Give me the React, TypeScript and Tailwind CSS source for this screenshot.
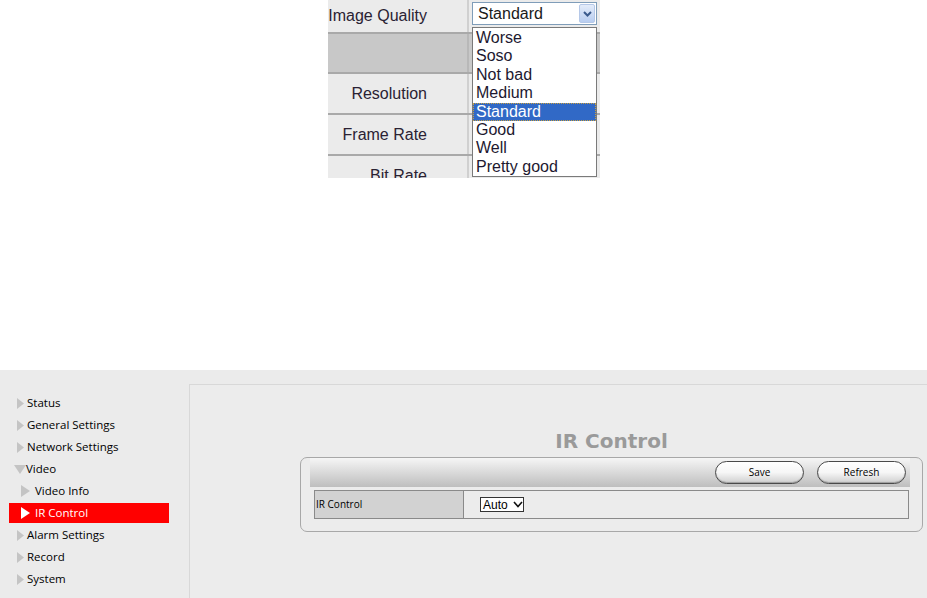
import React from 'react';

const qualityOptions = ['Worse', 'Soso', 'Not bad', 'Medium', 'Standard', 'Good', 'Well', 'Pretty good'];

type NavItem = { label: string; level: 0 | 1; open?: boolean; active?: boolean };

const navItems: NavItem[] = [
  { label: 'Status', level: 0 },
  { label: 'General Settings', level: 0 },
  { label: 'Network Settings', level: 0 },
  { label: 'Video', level: 0, open: true },
  { label: 'Video Info', level: 1 },
  { label: 'IR Control', level: 1, active: true },
  { label: 'Alarm Settings', level: 0 },
  { label: 'Record', level: 0 },
  { label: 'System', level: 0 },
];

const Arrow: React.FC<{ open?: boolean; small?: boolean; color: string }> = ({ open, small, color }) => {
  if (open) {
    return (
      <svg width="12" height="9" viewBox="0 0 12 9" className="shrink-0">
        <polygon points="0,0 12,0 6,9" fill={color} />
      </svg>
    );
  }
  return small ? (
    <svg width="9" height="12" viewBox="0 0 9 12" className="shrink-0">
      <polygon points="0,0 9,6 0,12" fill={color} />
    </svg>
  ) : (
    <svg width="7" height="11" viewBox="0 0 7 11" className="shrink-0">
      <polygon points="0,0 7,5.5 0,11" fill={color} />
    </svg>
  );
};

const QualityTable: React.FC = () => (
  <div className="relative ml-[328px] w-[272px] h-[178px] overflow-hidden font-['Liberation_Sans',Arial,sans-serif] text-[16px] text-[#2a2233]">
    <div className="flex h-[32px] bg-[#ebebeb]">
      <div className="w-[141px] pr-[40px] flex items-center justify-end border-r-2 border-[#d0d0d0]">Image Quality</div>
      <div className="flex-1" />
    </div>
    <div className="flex h-[40px] border-t-2 border-[#a9a9a9] bg-[#c8c8c8]">
      <div className="w-[141px] border-r-2 border-[#b8b8b8]" />
      <div className="flex-1" />
    </div>
    {['Resolution', 'Frame Rate', 'Bit Rate'].map((label) => (
      <div key={label} className="flex h-[41px] border-t-2 border-[#a9a9a9] bg-[#ebebeb]">
        <div className="w-[141px] pr-[40px] flex items-center justify-end border-r-2 border-[#d0d0d0]">{label}</div>
        <div className="flex-1" />
      </div>
    ))}

    <div className="absolute left-[144px] top-[2px] w-[125px] h-[23px] bg-white border border-[#7f9db9] flex items-center pl-[5px]">
      <span className="flex-1 text-[#1a1a1a]">Standard</span>
      <div className="w-[16px] h-[19px] mr-px rounded-[2px] border border-[#b5c8e8] bg-gradient-to-b from-[#e4ecf9] to-[#b8cdf0] flex items-center justify-center">
        <svg width="9" height="6" viewBox="0 0 9 6">
          <polyline points="1,1 4.5,4.5 8,1" fill="none" stroke="#3a5a8c" strokeWidth="2" />
        </svg>
      </div>
    </div>

    <div className="absolute left-[144px] top-[27px] w-[125px] h-[150px] bg-white border border-[#7a7a7a] py-px">
      {qualityOptions.map((opt) => (
        <div
          key={opt}
          className={
            opt === 'Standard'
              ? 'h-[18.4px] leading-[18px] pl-[3px] bg-[#3169c6] text-white outline-1 outline-dotted outline-[#c9a040] -outline-offset-1'
              : 'h-[18.4px] leading-[18px] pl-[3px] text-[#1d1830]'
          }
        >
          {opt}
        </div>
      ))}
    </div>
  </div>
);

const Sidebar: React.FC = () => (
  <div className="w-[189px] shrink-0 pt-[22px] flex flex-col font-['Open_Sans',sans-serif] text-[11.5px] text-black">
    {navItems.map((item) => {
      if (item.level === 1) {
        return (
          <div key={item.label} className="h-[22px] py-px">
            <div
              className={`ml-[9px] w-[160px] h-[20px] flex items-center gap-[5px] pl-[12px] ${item.active ? 'bg-[#ff0000] text-white' : ''}`}
            >
              <Arrow small color={item.active ? '#ffffff' : '#c4c4c4'} />
              <span>{item.label}</span>
            </div>
          </div>
        );
      }
      return (
        <div key={item.label} className={`h-[22px] flex items-center ${item.open ? 'pl-[14px] gap-[0px]' : 'pl-[17px] gap-[3px]'}`}>
          <Arrow open={item.open} color="#c4c4c4" />
          <span>{item.label}</span>
        </div>
      );
    })}
  </div>
);

const PillButton: React.FC<{ label: string }> = ({ label }) => (
  <button
    type="button"
    className="w-[89px] h-[23px] rounded-full border border-[#4a4a4a] bg-gradient-to-b from-white via-[#f6f6f6] to-[#cfcfcf] shadow-[inset_0_-1px_1px_rgba(0,0,0,0.25)] text-[10px] text-black font-['Open_Sans',sans-serif]"
  >
    {label}
  </button>
);

const IrPanel: React.FC = () => (
  <div className="flex-1 mt-[14px] border-l border-t border-[#d8d8d8] bg-[#ececec]">
    <div className="ml-[110px] w-[623px]">
      <h1 className="h-[48px] pt-[35px] leading-[43px] text-center font-['DejaVu_Sans',Verdana,sans-serif] font-bold text-[20px] text-[#9a9a9a]">
        IR Control
      </h1>
      <div className="mt-[24px] h-[75px] rounded-[7px] border border-[#a8a8a8] pl-[9px] pr-[12px]">
        <div className="h-[29px] flex items-center justify-end gap-[13px] pr-[4px] bg-gradient-to-b from-[#f6f6f6] to-[#bebebe]">
          <PillButton label="Save" />
          <PillButton label="Refresh" />
        </div>
        <div className="mt-[3px] ml-[4px] mr-px h-[29px] flex border border-[#8a8a8a] font-['Open_Sans',sans-serif] text-[10px] text-black">
          <div className="w-[149px] flex items-center pl-px bg-[#d2d2d2] border-r border-[#8a8a8a]">IR Control</div>
          <div className="flex-1 flex items-center pl-[16px]">
            <div className="w-[44px] h-[15px] border border-[#333] bg-white flex items-center pl-[2px] gap-[5px] font-['Liberation_Sans',Arial,sans-serif] text-[12px]">
              <span>Auto</span>
              <svg width="10" height="7" viewBox="0 0 10 7">
                <polyline points="1,1 5,5.5 9,1" fill="none" stroke="#111" strokeWidth="1.6" />
              </svg>
            </div>
          </div>
        </div>
      </div>
    </div>
  </div>
);

export default function App() {
  return (
    <div className="w-[927px] h-[598px] bg-white flex flex-col overflow-hidden">
      <QualityTable />
      <div className="h-[192px]" />
      <div className="flex-1 flex bg-[#ebebeb]">
        <Sidebar />
        <IrPanel />
      </div>
    </div>
  );
}
